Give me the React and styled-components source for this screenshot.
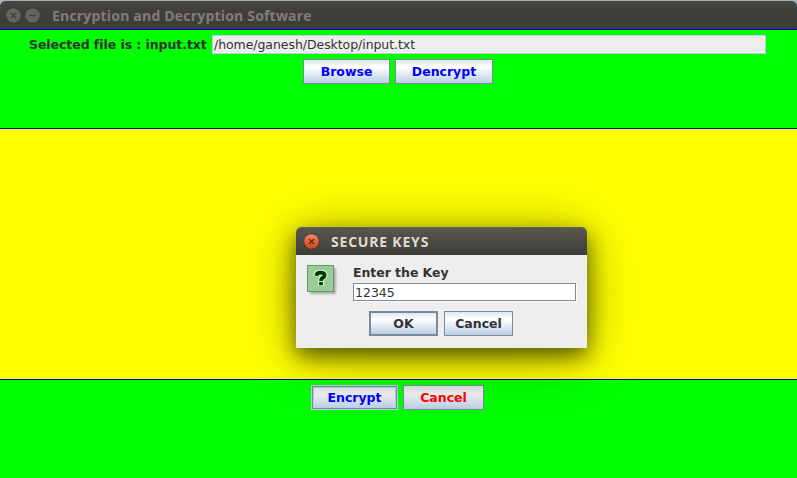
import React from "react";
import styled, { createGlobalStyle } from "styled-components";

const GlobalStyle = createGlobalStyle`
  * { box-sizing: border-box; }
  body { margin: 0; overflow: hidden; }
`;

const Screen = styled.div`
  position: relative;
  width: 797px;
  height: 478px;
  padding-top: 1px;
  display: flex;
  flex-direction: column;
  background: #a3b1bb;
  color: #333;
  font: 12.5px/16px "DejaVu Sans", sans-serif;
  overflow: hidden;
`;

const TitleBar = styled.header`
  display: flex;
  align-items: center;
  flex: none;
  height: 28px;
  padding-left: ${(p) => (p.$active ? "7px" : "5px")};
  border-radius: 6px 6px 0 0;
  background: ${(p) =>
    p.$active
      ? "linear-gradient(#5b5850, #55524b 20%, #3e3d38)"
      : "linear-gradient(#4a4a45, #42413c 15%, #3c3b37)"};
  box-shadow: ${(p) => (p.$active ? "inset 0 1px #65625a" : "inset 0 1px #43443f")};
`;

const Title = styled.h1`
  margin: 0 0 0 9px;
  padding-top: 1px;
  font: bold 14px/20px "Open Sans", sans-serif;
  letter-spacing: ${(p) => p.$spacing}px;
  color: ${(p) => p.$color};
  white-space: nowrap;
`;

const WindowButton = styled.svg`
  display: block;
  flex: none;
  width: 17px;
  height: 17px;
  margin-right: 2px;
`;

const Band = styled.section`
  flex: none;
  height: ${(p) => p.$height}px;
  border-top: 1px solid #0000c0;
  padding-top: 5px;
  background: #00ff00;
`;

const Canvas = styled.main`
  flex: none;
  height: 251px;
  border-top: 1px solid #0000ff;
  background: #ffff00;
`;

const FileRow = styled.div`
  display: flex;
  align-items: center;
  padding-left: 29px;
`;

const Label = styled.label`
  width: ${(p) => p.$width}px;
  flex: none;
  font-weight: bold;
  letter-spacing: ${(p) => p.$spacing || 0}px;
  white-space: nowrap;
`;

const PathField = styled.div`
  width: 554px;
  height: 19px;
  padding: 1px 1px;
  border: 1px solid #b8cfe5;
  background: #eee;
  line-height: 16px;
  letter-spacing: -0.06px;
`;

const ButtonRow = styled.div`
  display: flex;
  gap: ${(p) => p.$gap}px;
  padding-left: ${(p) => p.$left}px;
  margin-top: ${(p) => p.$top || 0}px;
`;

const Button = styled.button`
  width: ${(p) => p.$width}px;
  height: 25px;
  padding: 1px 0 0;
  border: ${(p) => (p.$default ? 2 : 1)}px solid #7a8a99;
  border-radius: 0;
  background: ${(p) =>
    p.$shaded
      ? "linear-gradient(#d9e3ea, #eeeeee 30%, #e9eef2 42%, #b8cfe5)"
      : "linear-gradient(#dde8f3, #ffffff 30%, #f6f9fc 40%, #b8cfe5)"};
  color: ${(p) => p.$color || "#333"};
  font: bold 12.5px/20px "DejaVu Sans", sans-serif;
  ${(p) =>
    p.$focused &&
    "border-color: #b8cfe5; box-shadow: inset 0 0 0 1px #7a8a99, inset 0 0 0 2px #b8cfe5;"}
`;

const Dialog = styled.div`
  position: absolute;
  left: 296px;
  top: 227px;
  width: 291px;
  height: 121px;
  border-radius: 6px 6px 0 0;
  background: #eee;
  box-shadow: 0 8px 22px rgba(0, 0, 0, 0.6), 0 6px 60px rgba(0, 0, 0, 0.3);
`;

const DialogBody = styled.div`
  display: flex;
  padding: 10px 0 0 11px;
`;

const QuestionIcon = styled.svg`
  display: block;
  flex: none;
  width: 32px;
  height: 32px;
  margin-right: 14px;
`;

const Prompt = styled.div`
  display: flex;
  flex-direction: column;
`;

const KeyField = styled.div`
  width: 223px;
  height: 18px;
  margin: 2px 0 1px;
  padding: 1px 1px;
  border: 1px solid #7a8a99;
  box-shadow: 1px 1px #fff;
  background: #fff;
  line-height: 16px;
`;

function TitleButton({ kind, active }) {
  return (
    <WindowButton viewBox="0 0 17 17">
      <defs>
        <linearGradient id="orb" x1="0" y1="0" x2="0" y2="1">
          <stop offset="0" stopColor="#f78d6c" />
          <stop offset=".5" stopColor="#e95d32" />
          <stop offset="1" stopColor="#dc4716" />
        </linearGradient>
      </defs>
      <circle cx="8.5" cy="8.5" r="8" fill={active ? "#393832" : "#3a3935"} />
      <circle cx="8.5" cy="8.5" r="7.3" fill={active ? "url(#orb)" : "#65635d"} />
      <path
        d={kind === "close" ? "M6 6 11 11M11 6 6 11" : "M5 8.5H12"}
        stroke={active ? "#49291d" : "#3d3c37"}
        strokeWidth="1.1"
        fill="none"
      />
    </WindowButton>
  );
}

function Question() {
  return (
    <QuestionIcon viewBox="0 0 32 32">
      <defs>
        <filter id="soft" x="-20%" y="-20%" width="140%" height="140%">
          <feGaussianBlur stdDeviation="1.2" />
        </filter>
      </defs>
      <rect x="3" y="3" width="26" height="26" fill="#aaa" filter="url(#soft)" />
      <rect x=".5" y=".5" width="26" height="26" fill="#99cc99" stroke="#669966" />
      <g fill="none">
        <path d="M9 11.2V10Q9.6 7.6 13.5 7.6Q17.6 7.6 17.6 10.2Q17.6 11.8 15.4 13Q14 13.8 14 16M14 17V21" stroke="#ccffcc" strokeWidth="5.8" />
        <path d="M9.2 10.8Q9.6 7.6 13.5 7.6Q17.6 7.6 17.6 10.2Q17.6 11.8 15.4 13Q14 13.8 14 16M14 17V20.2" stroke="#003c00" strokeWidth="3.8" />
        <path d="M11 16.5H17" stroke="#ccffcc" strokeWidth="1" />
      </g>
    </QuestionIcon>
  );
}

export default function App() {
  return (
    <>
      <GlobalStyle />
      <Screen>
        <TitleBar>
          <TitleButton kind="close" />
          <TitleButton kind="minimize" />
          <Title $spacing={0.19} $color="#807d78">Encryption and Decryption Software</Title>
        </TitleBar>
        <Band $height={99}>
          <FileRow>
            <Label $width={183} $spacing={-0.06}>Selected file is : input.txt</Label>
            <PathField>/home/ganesh/Desktop/input.txt</PathField>
          </FileRow>
          <ButtonRow $left={303} $gap={5} $top={5}>
            <Button $width={87} $color="#0000ff">Browse</Button>
            <Button $width={98} $color="#0000ff">Dencrypt</Button>
          </ButtonRow>
        </Band>
        <Canvas />
        <Band $height={99}>
          <ButtonRow $left={311} $gap={5}>
            <Button $width={87} $color="#0000ff" $shaded $focused>Encrypt</Button>
            <Button $width={81} $color="#ff0000" $shaded>Cancel</Button>
          </ButtonRow>
        </Band>
        <Dialog role="dialog">
          <TitleBar $active>
            <TitleButton kind="close" active />
            <Title $spacing={0.8} $color="#dfdbd2">SECURE KEYS</Title>
          </TitleBar>
          <DialogBody>
            <Question />
            <Prompt>
              <Label $spacing={-0.05}>Enter the Key</Label>
              <KeyField>12345</KeyField>
            </Prompt>
          </DialogBody>
          <ButtonRow $left={73} $gap={6} $top={9}>
            <Button $width={69} $default>OK</Button>
            <Button $width={69}>Cancel</Button>
          </ButtonRow>
        </Dialog>
      </Screen>
    </>
  );
}
